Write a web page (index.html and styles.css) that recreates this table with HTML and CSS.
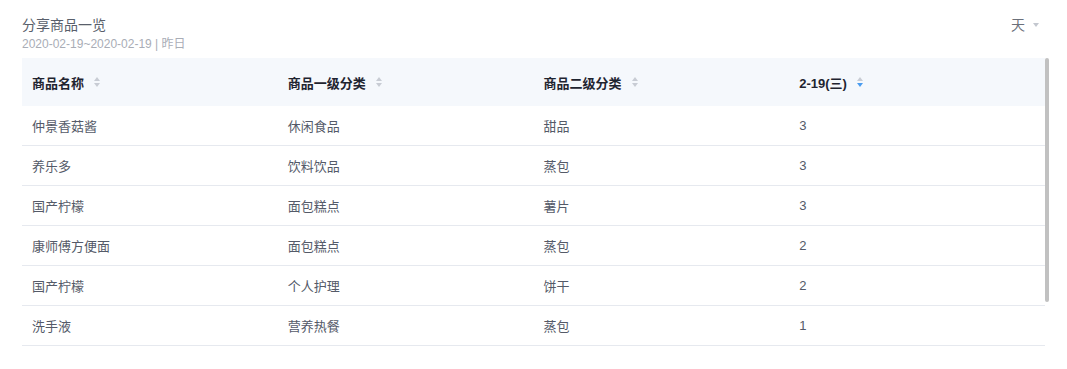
FILE: index.html
```html
<!DOCTYPE html>
<html lang="zh">
<head>
<meta charset="utf-8">
<title>分享商品一览</title>
<link rel="stylesheet" href="styles.css">
</head>
<body>
<div class="card">
  <div class="card-head">
    <div class="titles">
      <div class="title">分享商品一览</div>
      <div class="subtitle">2020-02-19~2020-02-19 | 昨日</div>
    </div>
    <div class="period">天<span class="caret"></span></div>
  </div>
  <div class="table-wrap">
    <table class="data">
      <thead>
        <tr>
          <th><span class="th-in">商品名称<span class="sorter"><i class="up"></i><i class="down"></i></span></span></th>
          <th><span class="th-in">商品一级分类<span class="sorter"><i class="up"></i><i class="down"></i></span></span></th>
          <th><span class="th-in">商品二级分类<span class="sorter"><i class="up"></i><i class="down"></i></span></span></th>
          <th><span class="th-in">2-19(三)<span class="sorter"><i class="up"></i><i class="down active"></i></span></span></th>
        </tr>
      </thead>
      <tbody>
        <tr><td>仲景香菇酱</td><td>休闲食品</td><td>甜品</td><td>3</td></tr>
        <tr><td>养乐多</td><td>饮料饮品</td><td>蒸包</td><td>3</td></tr>
        <tr><td>国产柠檬</td><td>面包糕点</td><td>薯片</td><td>3</td></tr>
        <tr><td>康师傅方便面</td><td>面包糕点</td><td>蒸包</td><td>2</td></tr>
        <tr><td>国产柠檬</td><td>个人护理</td><td>饼干</td><td>2</td></tr>
        <tr><td>洗手液</td><td>营养热餐</td><td>蒸包</td><td>1</td></tr>
      </tbody>
    </table>
    <div class="scroll-thumb"></div>
  </div>
</div>
</body>
</html>
```
FILE: styles.css
```css
html, body {
  margin: 0;
  padding: 0;
  background: #ffffff;
}
body {
  font-family: "Liberation Sans", "Noto Sans CJK SC", sans-serif;
  color: #5a6070;
}
.card {
  padding: 14px 18px 0 22px;
}
.card-head {
  display: flex;
  justify-content: space-between;
  align-items: flex-start;
}
.title {
  font-size: 14px;
  line-height: 22px;
  color: #595f6b;
}
.subtitle {
  font-size: 12px;
  line-height: 16px;
  color: #a9adb6;
}
.period {
  display: flex;
  align-items: center;
  gap: 8px;
  font-size: 14px;
  line-height: 22px;
  color: #6b707a;
  padding-right: 10px;
}
.caret {
  width: 0;
  height: 0;
  border-left: 3.5px solid transparent;
  border-right: 3.5px solid transparent;
  border-top: 4px solid #c3c7cf;
}
.table-wrap {
  position: relative;
  margin-top: 6px;
  width: 1027px;
}
.data {
  width: 1023px;
  border-collapse: collapse;
  table-layout: fixed;
  font-size: 13px;
}
.data th {
  height: 48px;
  padding: 0 10px;
  background: #f5f8fc;
  text-align: left;
  font-weight: bold;
  color: #1f2430;
}
.th-in {
  display: inline-flex;
  align-items: center;
  gap: 8px;
}
.sorter {
  display: inline-flex;
  flex-direction: column;
  gap: 2px;
  margin-left: 2px;
}
.sorter i {
  display: block;
  width: 0;
  height: 0;
  border-left: 3.5px solid transparent;
  border-right: 3.5px solid transparent;
}
.sorter .up {
  border-bottom: 4px solid #c8ccd4;
}
.sorter .down {
  border-top: 4px solid #c8ccd4;
}
.sorter .down.active {
  border-top-color: #4a9cf0;
}
.data td {
  height: 39px;
  padding: 0 10px;
  border-bottom: 1px solid #e6e9ef;
  color: #545a68;
}
.scroll-thumb {
  position: absolute;
  top: 0;
  right: 0;
  width: 4px;
  height: 244px;
  border-radius: 2px;
  background: #c1c1c1;
}
```
